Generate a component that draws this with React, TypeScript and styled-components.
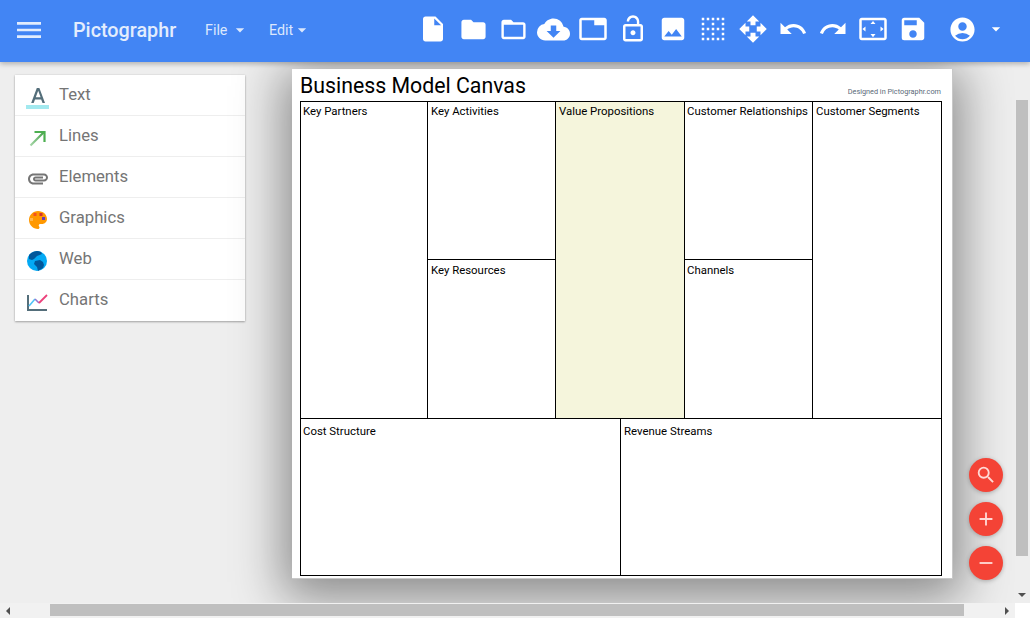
import React from "react";
import styled, { createGlobalStyle } from "styled-components";
import {
  MdMenu, MdArrowDropDown, MdInsertDriveFile, MdFolder, MdFolderOpen, MdCloudDownload, MdTab,
  MdLockOpen, MdImage, MdBorderClear, MdOpenWith, MdUndo, MdRedo, MdSettingsOverscan, MdSave,
  MdAccountCircle, MdSearch, MdAdd, MdRemove,
} from "react-icons/md";

const Global = createGlobalStyle`
  html, body { margin: 0; padding: 0; height: 100%; overflow: hidden; }
  #root { height: 100%; }
  body { font-family: Roboto, "Liberation Sans", sans-serif; background: #eee; }
`;

const Page = styled.div`
  width: 1030px; height: 618px; display: flex; flex-direction: column; position: relative; overflow: hidden; background: #eee;
`;
const Header = styled.header`
  height: 62px; box-sizing: border-box; padding-bottom: 2px; flex: none; background: #4285f4; display: flex; align-items: center; color: #fff;
  position: relative; z-index: 3; box-shadow: 0 2px 5px rgba(0,0,0,.26);
`;
const Burger = styled.div`
  width: 32px; margin-left: 13px; display: flex; color: #e3edfd;
`;
const Brand = styled.div`
  margin-left: 28px; width: 103px; font-size: 19.8px; font-weight: 500; color: #e3edfd; white-space: nowrap;
`;
const Menu = styled.div<{ $w: number; $ml?: number; $gap: number }>`
  width: ${p => p.$w}px; margin-left: ${p => p.$ml ?? 0}px; display: flex; align-items: center; font-size: 14.3px; color: #dce8fd; white-space: nowrap;
  svg { margin-left: ${p => p.$gap}px; flex: none; }
`;
const Tools = styled.div`
  display: flex; align-items: center; margin-left: 84px; padding-bottom: 2px;
`;
const Tool = styled.span<{ $w?: number; $ml?: number }>`
  width: ${p => p.$w ?? 40}px; margin-left: ${p => p.$ml ?? 0}px; display: flex; justify-content: center; color: #fff;
`;
const Work = styled.div`
  flex: 1; display: grid; grid-template-columns: 1fr 15px; grid-template-rows: 1fr 15px; min-height: 0;
`;
const Viewport = styled.main`
  display: flex; align-items: flex-start; padding: 7px 0 0 15px; position: relative; overflow: hidden; background: #eee;
`;
const Side = styled.nav`
  width: 230px; margin-top: 6px; background: #fff; flex: none; box-shadow: 0 1px 2px rgba(0,0,0,.3), 0 0 2px rgba(0,0,0,.1);
`;
const SideRow = styled.div`
  height: 40px; display: flex; align-items: center; border-bottom: 1px solid #eee; &:last-child { border-bottom: 0; height: 41px; }
`;
const SideIcon = styled.span`
  width: 24px; margin: 0 9px 0 11px; display: flex; justify-content: center; flex: none; height: 40px; align-items: center;
  svg { display: block; flex: none; }
`;
const SideLabel = styled.span`
  font-size: 16.7px; color: #757575; position: relative; top: -1px;
`;
const Sheet = styled.section`
  width: 661px; height: 510px; margin-left: 47px; flex: none; background: #fff; padding: 0 10px 0 8px; box-sizing: border-box;
  border-right: 1px solid #c8c8c8; border-bottom: 1px solid #c8c8c8;
  box-shadow: 0 10px 46px 9px rgba(0,0,0,.42);
`;
const SheetHead = styled.div`
  height: 32px; display: flex; justify-content: space-between; align-items: flex-start;
`;
const Title = styled.h1`
  margin: 3px 0 0; font-size: 21.3px; line-height: 28px; font-weight: 400; color: #000; white-space: nowrap;
`;
const Credit = styled.span`
  font-size: 7.3px; color: #5a6a78; margin: 18px 1px 0 0; white-space: nowrap;
`;
const Board = styled.div`
  width: 642px; height: 475px; box-sizing: border-box; border: 1px solid #000; display: grid;
  grid-template-columns: 127px 128px 129px 128px 128px;
  grid-template-rows: 158px 159px 156px;
`;
const Cell = styled.div<{ $area?: string; $tint?: boolean; $noR?: boolean; $noB?: boolean; $pt?: number; $pl?: number }>`
  ${p => p.$area ? `grid-area: ${p.$area};` : ""} box-sizing: border-box; min-width: 0; padding: ${p => p.$pt ?? 2}px 0 0 ${p => p.$pl ?? 3}px;
  border-right: ${p => p.$noR ? "0" : "1px solid #000"}; border-bottom: ${p => p.$noB ? "0" : "1px solid #000"};
  background: ${p => p.$tint ? "#f5f5dc" : "#fff"}; font-size: 11.4px; line-height: 14px; color: #000; white-space: nowrap;
`;
const Bottom = styled.div`
  grid-area: 3 / 1 / 4 / 6; display: grid; grid-template-columns: 320px 1fr;
`;
const Fabs = styled.div`
  position: absolute; left: 969px; top: 396px; display: flex; flex-direction: column; gap: 10px;
`;
const Fab = styled.button`
  width: 34px; height: 34px; padding: 0; border: 0; border-radius: 50%; background: #f44336; color: #ffd9d5; display: flex; align-items: center; justify-content: center;
  box-shadow: 0 1px 4px rgba(0,0,0,.25);
`;
const VBar = styled.div`
  background: #eee; display: flex; flex-direction: column; align-items: flex-start; position: relative; z-index: 1; padding: 38px 0 0 1px;
  box-sizing: border-box;
`;
const VThumb = styled.div`
  width: 12px; height: 456px; background: #bfbfbf;
`;
const HBar = styled.div`
  background: #f1f1f1; height: 15px; padding: 1px 0 0 50px; box-sizing: border-box; position: relative;
`;
const HThumb = styled.div`
  width: 914px; height: 12px; background: #bfbfbf;
`;
const Corner = styled.div`background: #fff;`;
const Arrow = styled.i<{ $dir: "l" | "r" | "d" }>`
  position: absolute; width: 0; height: 0; border-style: solid;
  ${p => p.$dir === "l" && "left: 6px; top: 4px; border-width: 4px 4px 4px 0; border-color: transparent #505050 transparent transparent;"}
  ${p => p.$dir === "r" && "right: 6px; top: 4px; border-width: 4px 0 4px 4px; border-color: transparent transparent transparent #505050;"}
  ${p => p.$dir === "d" && "left: 3px; bottom: 6px; border-width: 4px 4px 0 4px; border-color: #505050 transparent transparent transparent;"}
`;

const sideItems: { label: string; icon: React.ReactNode }[] = [
  { label: "Text", icon: (
    <svg width="24" height="28" viewBox="0 0 24 28"><rect x="0" y="24" width="23" height="4" fill="#a2e9ef" /><path d="M10.800 7h2.600l5.600 15h-2.500l-1.300-3.600H9l-1.300 3.600H5.200zM9.800 16.300h4.800L12.200 9.700z" fill="#546e7a" fillRule="evenodd" /></svg>
  ) },
  { label: "Lines", icon: (
    <svg width="24" height="24" viewBox="0 0 24 24"><defs><linearGradient id="ln" x1="0" y1="1" x2="1" y2="0"><stop offset="0" stopColor="#a5d6a7" /><stop offset="1" stopColor="#43a047" /></linearGradient></defs><path d="M4.500 21.500L18 8" fill="none" stroke="url(#ln)" strokeWidth="2.200" /><path d="M8.500 8H18.500V18" fill="none" stroke="#4caf50" strokeWidth="2.200" /></svg>
  ) },
  { label: "Elements", icon: (
    <svg width="24" height="24" viewBox="0 0 24 24"><path d="M2 12.500C2 9.460 4.460 7 7.500 7H18c2.210 0 4 1.790 4 4s-1.790 4-4 4H9.500C8.120 15 7 13.880 7 12.500S8.120 10 9.500 10H17v2H9.410c-.55 0-.55 1 0 1H18c1.100 0 2-.9 2-2s-.9-2-2-2H7.500C5.570 9 4 10.570 4 12.500S5.570 16 7.500 16H17v2H7.500C4.460 18 2 15.540 2 12.500z" fill="#757575" transform="translate(0 1.500)" /></svg>
  ) },
  { label: "Graphics", icon: (
    <svg width="24" height="24" viewBox="0 0 24 24"><path transform="translate(0 2)" d="M12 3c-4.970 0-9 4.030-9 9s4.030 9 9 9c.83 0 1.500-.67 1.500-1.500 0-.39-.15-.74-.39-1.010-.23-.26-.38-.61-.38-.99 0-.83.67-1.500 1.500-1.500H16c2.760 0 5-2.240 5-5 0-4.420-4.030-8-9-8z" fill="#ff9800" /><rect x="7.500" y="7" width="3" height="3" fill="#f4511e" /><rect x="13.500" y="7" width="3" height="3" fill="#d32f2f" /><rect x="16" y="11" width="3" height="3" fill="#673ab7" /><rect x="4" y="12" width="3" height="3" fill="#ffb74d" /></svg>
  ) },
  { label: "Web", icon: (
    <svg width="24" height="24" viewBox="0 0 24 24"><circle cx="11" cy="14" r="10" fill="#03a9f4" /><path d="M3 8a10 10 0 0 1 12-3l1 2-5 2-3 3-2 1-3-1zM9 14l5-1 3 2 1 3-1 3-5 3-1-4-3-3z" fill="#01579b" /></svg>
  ) },
  { label: "Charts", icon: (
    <svg width="24" height="24" viewBox="0 0 24 24"><path d="M2 6v15h19" fill="none" stroke="#546e7a" strokeWidth="2" /><path d="M3 17l6-7" fill="none" stroke="#4fc3f7" strokeWidth="1.600" /><path d="M9 10l4 4" fill="none" stroke="#9575cd" strokeWidth="1.600" /><path d="M13 14l8-8" fill="none" stroke="#ec407a" strokeWidth="1.800" /></svg>
  ) },
];

const tools: { I: React.ComponentType<{ size?: number }>; s: number }[] = [
  { I: MdInsertDriveFile, s: 30 }, { I: MdFolder, s: 29 }, { I: MdFolderOpen, s: 29 },
  { I: MdCloudDownload, s: 33 }, { I: MdTab, s: 30 }, { I: MdLockOpen, s: 30 },
  { I: MdImage, s: 30 }, { I: MdBorderClear, s: 30 }, { I: MdOpenWith, s: 30 },
  { I: MdUndo, s: 30 }, { I: MdRedo, s: 30 }, { I: MdSettingsOverscan, s: 30 },
  { I: MdSave, s: 30 },
];

export default function App() {
  return (
    <Page>
      <Global />
      <Header>
        <Burger><MdMenu size={32} /></Burger>
        <Brand>Pictographr</Brand>
        <Menu $w={64} $ml={29} $gap={3}>File<MdArrowDropDown size={20} /></Menu>
        <Menu $w={60} $gap={-1}>Edit<MdArrowDropDown size={20} /></Menu>
        <Tools>
          {tools.map(({ I, s }, i) => <Tool key={i}><I size={s} /></Tool>)}
          <Tool $w={58}><MdAccountCircle size={29} /></Tool>
          <Tool $w={20} $ml={-5}><MdArrowDropDown size={20} /></Tool>
        </Tools>
      </Header>
      <Work>
        <Viewport>
          <Side>
            {sideItems.map(s => (
              <SideRow key={s.label}><SideIcon>{s.icon}</SideIcon><SideLabel>{s.label}</SideLabel></SideRow>
            ))}
          </Side>
          <Sheet>
            <SheetHead>
              <Title>Business Model Canvas</Title>
              <Credit>Designed in Pictographr.com</Credit>
            </SheetHead>
            <Board>
              <Cell $area="1 / 1 / 3 / 2" $pl={2}>Key Partners</Cell>
              <Cell $area="1 / 2 / 2 / 3">Key Activities</Cell>
              <Cell $area="2 / 2 / 3 / 3" $pt={3}>Key Resources</Cell>
              <Cell $area="1 / 3 / 3 / 4" $tint>Value Propositions</Cell>
              <Cell $area="1 / 4 / 2 / 5" $pl={2}>Customer Relationships</Cell>
              <Cell $area="2 / 4 / 3 / 5" $pt={3} $pl={2}>Channels</Cell>
              <Cell $area="1 / 5 / 3 / 6" $noR>Customer Segments</Cell>
              <Bottom>
                <Cell $noB $pl={2} $pt={5}>Cost Structure</Cell>
                <Cell $noB $noR $pt={5}>Revenue Streams</Cell>
              </Bottom>
            </Board>
          </Sheet>
          <Fabs>
            <Fab><MdSearch size={22} /></Fab>
            <Fab><MdAdd size={22} /></Fab>
            <Fab><MdRemove size={22} /></Fab>
          </Fabs>
        </Viewport>
        <VBar><VThumb /><Arrow $dir="d" /></VBar>
        <HBar><Arrow $dir="l" /><HThumb /><Arrow $dir="r" /></HBar>
        <Corner />
      </Work>
    </Page>
  );
}
